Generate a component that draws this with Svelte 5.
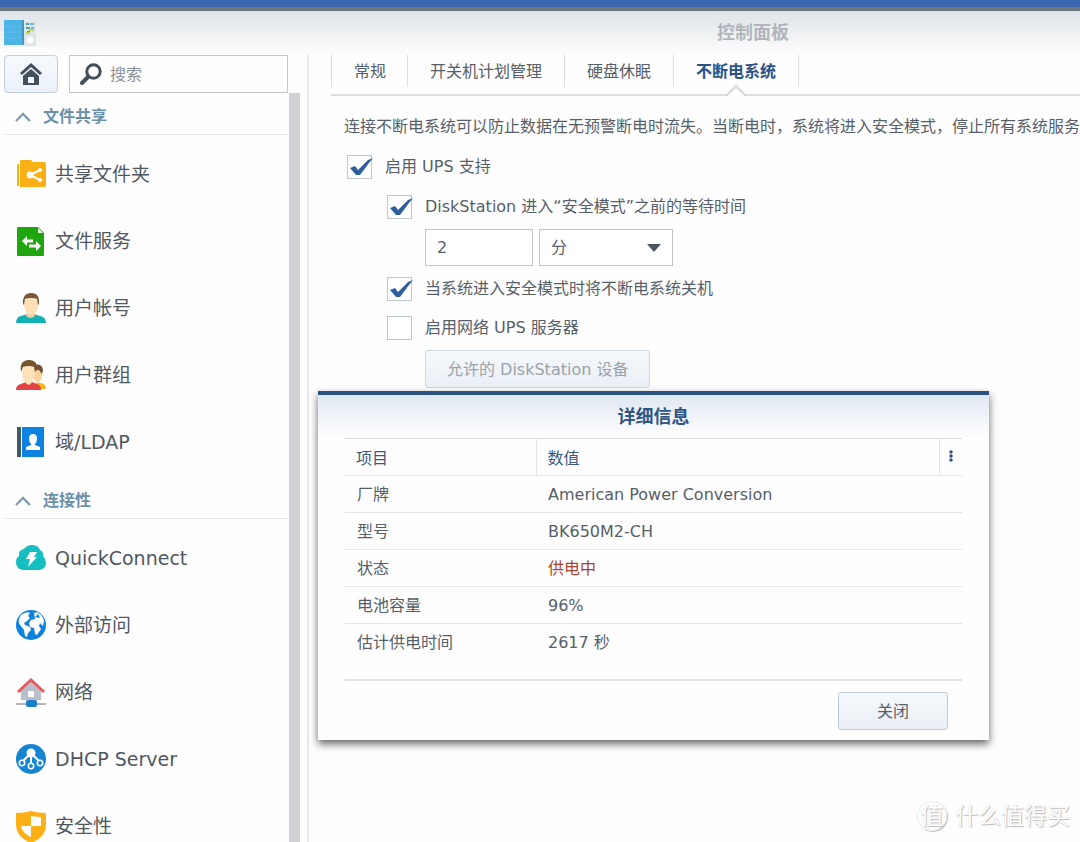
<script>
  let search = "";
  let activeTab = "不断电系统";
  let upsEnabled = true;
  let waitEnabled = true;
  let waitTime = 2;
  let waitUnit = "min";
  let shutdownUps = true;
  let networkServer = false;
  let showDetails = true;

  const tabs = ["常规", "开关机计划管理", "硬盘休眠", "不断电系统"];

  let sections = [
    {
      title: "文件共享",
      open: true,
      items: [
        { icon: "folder", label: "共享文件夹" },
        { icon: "file", label: "文件服务" },
        { icon: "user", label: "用户帐号" },
        { icon: "group", label: "用户群组" },
        { icon: "ldap", label: "域/LDAP" },
      ],
    },
    {
      title: "连接性",
      open: true,
      items: [
        { icon: "cloud", label: "QuickConnect" },
        { icon: "globe", label: "外部访问" },
        { icon: "network", label: "网络" },
        { icon: "dhcp", label: "DHCP Server" },
        { icon: "shield", label: "安全性" },
      ],
    },
  ];

  const details = [
    { name: "厂牌", value: "American Power Conversion" },
    { name: "型号", value: "BK650M2-CH" },
    { name: "状态", value: "供电中", alert: true },
    { name: "电池容量", value: "96%" },
    { name: "估计供电时间", value: "2617 秒" },
  ];

  function toggle(section) {
    section.open = !section.open;
    sections = sections;
  }
</script>

<div class="desktop">
  <div class="taskbar"></div>
  <div class="window">
    <header>
      <svg class="app-icon" viewBox="0 0 32 28">
        <rect x="0" y="1" width="19" height="25" fill="#4db4e6" />
        <path d="M0 7h19M0 13h19M0 19h19" stroke="#62bdea" stroke-width="1" />
        <rect x="18" y="1" width="2" height="25" fill="#4594c2" />
        <rect x="20" y="2" width="12" height="25" fill="#dfe5e6" />
        <path d="M22 5h3M22 9h4M23 13h3" stroke="#4c9f9b" stroke-width="2" />
        <path d="M26 5h4M27 9h3" stroke="#67b5dc" stroke-width="2" />
        <path d="M25 11h5M22 14h4" stroke="#bfd64a" stroke-width="2" />
        <circle cx="26" cy="21" r="3.5" fill="#fff" />
      </svg>
      <h1>控制面板</h1>
    </header>

    <div class="body">
      <aside>
        <div class="tools">
          <button class="home" aria-label="Home">
            <svg viewBox="0 0 22 22">
              <path d="M11 0 22 10l-2 2-9-8-9 8-2-2z" fill="#434f5a" />
              <path d="M11 6l8 7v9H3v-9z" fill="#434f5a" />
              <path d="M8 14h6v6H8z" fill="#f2f7fb" />
            </svg>
          </button>
          <label class="search">
            <svg viewBox="0 0 22 22">
              <circle cx="13.5" cy="8.5" r="6.7" fill="none" stroke="#434f5a" stroke-width="3" />
              <path d="M8 14l-6 6" stroke="#434f5a" stroke-width="4" stroke-linecap="round" />
            </svg>
            <input type="text" placeholder="搜索" aria-label="搜索" bind:value={search} />
          </label>
        </div>

        <div class="scroller">
          <nav>
            {#each sections as section}
              <button class="section" on:click={() => toggle(section)}>
                <svg viewBox="0 0 16 10" class:closed={!section.open}>
                  <path d="M1 9l7-7 7 7" fill="none" stroke="#7f9fae" stroke-width="2.4" />
                </svg>
                {section.title}
              </button>
              {#if section.open}
                <ul>
                  {#each section.items as item}
                    <li>
                      <a href="#{item.icon}">
                        <svg class="icon" viewBox="0 0 30 30">
                          {#if item.icon === "folder"}
                            <path d="M1 5h2v22H1z" fill="#fbb016" />
                            <path d="M4 27V2q0-1 1-1h10l2 2h11q2 0 2 2v22q0 1-1 1H4z" fill="#fbb016" />
                            <path d="M24 11l-10 5 10 5" fill="none" stroke="#fff" stroke-width="2" />
                            <circle cx="14" cy="16" r="3.4" fill="#fff" />
                            <circle cx="24" cy="11" r="2" fill="#fff" />
                            <circle cx="24" cy="21" r="2" fill="#fff" />
                          {:else if item.icon === "file"}
                            <path d="M2 1h20l6 6v22q0 1-1 1H2q-1 0-1-1V2q0-1 1-1z" fill="#1fa510" />
                            <path d="M22 2v5h5z" fill="#e4f6e0" />
                            <path d="M6 15l5-5v3.500h6v3h-6V20z" fill="#fff" />
                            <path d="M25 20l-5-5v3.500h-7v3h7V25z" fill="#fff" />
                          {:else if item.icon === "user"}
                            <path d="M0 30q0-6 5-7l6-2h7l6 2q6 1 6 7z" fill="#12b1b4" />
                            <path d="M10 20h9v3q-4 4-9 0z" fill="#f2cf9f" />
                            <path d="M8 8q7-6 14 0v5q-2 9-7 9t-7-9z" fill="#fde0b5" />
                            <path d="M7 11Q6 1 14 0q10-1 9 11l-1 1-1-6q-6-2-12 0l-1 6z" fill="#7c5835" />
                          {:else if item.icon === "group"}
                            <path d="M19 29q0-8 5-6 6 0 6 6z" fill="#fbb51d" />
                            <path d="M18 9h8v7q-1 6-5 7l-4-5z" fill="#fbd29c" />
                            <path d="M18 5q8-2 9 5l-1 4-3-4h-4z" fill="#715238" />
                            <path d="M0 30q0-5 5-6l5-2h6l5 2q4 1 4 6z" fill="#e44244" />
                            <path d="M7 8q7-5 12 1v6q-2 8-6 10-6-2-7-11z" fill="#fee2b9" />
                            <path d="M5 12Q3 1 12 0q10-1 9 10l-2 2-1-5q-5-2-11 0z" fill="#75542f" />
                          {:else if item.icon === "ldap"}
                            <path d="M1 0h4v30H1z" fill="#435764" />
                            <path d="M6 0h22v30H6z" fill="#0c83e0" />
                            <path d="M13 12q0-5 4-5t4 5q0 3-2 5v1l5 2v3H10v-3l5-2v-1q-2-2-2-5z" fill="#fff" />
                          {:else if item.icon === "cloud"}
                            <path d="M7 27q-7-1-7-8 0-4 3-6-1-6 5-7 3-4 8-4 6 0 8 5 4 2 3 6 3 3 3 7 0 6-7 7z" fill="#15bfc0" />
                            <path d="M14 9h7l-3 5h3l-9 10 2-8h-4z" fill="#fff" />
                          {:else if item.icon === "globe"}
                            <circle cx="15" cy="15" r="15" fill="#0c82df" />
                            <path d="M5 5q5-4 9-2l-2 3 2 2-3 3-3 2 1 2 5 2 1 3-3 3-1 4-2-1-1-6-4-5q-3-4 1-10z" fill="#fff" />
                            <path d="M18 3l3-1q6 3 7 9l-1 5-3-3-1 3 2 3-4 6-2-1-1-6-4-1-1-4 2-3 4-1z" fill="#fff" />
                            <path d="M19 7l3-3 2 4z" fill="#0c82df" />
                          {:else if item.icon === "network"}
                            <path d="M5 14l10-9 10 9v9H5z" fill="#b9bfca" />
                            <path d="M12 14h6v6h-6z" fill="#fff" />
                            <path d="M2 15L15 3l13 12" fill="none" stroke="#e7595c" stroke-width="3" />
                            <path d="M0 27h30" stroke="#b2b7bd" stroke-width="2" />
                            <rect x="10" y="23" width="11" height="7" rx="2" fill="#187fc9" />
                          {:else if item.icon === "dhcp"}
                            <circle cx="15" cy="15" r="15" fill="#1685d1" />
                            <path d="M15 10v9M12 12l-6 6M18 12l6 6" stroke="#fff" stroke-width="2" />
                            <circle cx="15" cy="9" r="4.500" fill="#fff" />
                            <circle cx="6" cy="19" r="2.700" fill="#1685d1" stroke="#fff" stroke-width="1.600" />
                            <circle cx="15" cy="22" r="2.700" fill="#1685d1" stroke="#fff" stroke-width="1.600" />
                            <circle cx="24" cy="19" r="2.700" fill="#1685d1" stroke="#fff" stroke-width="1.600" />
                          {:else}
                            <path d="M0 2q8 0 15-2 7 2 15 2v12q0 12-15 18Q0 26 0 14z" fill="#fbb016" />
                            <path d="M15 5q5 1 10 1v9H15z" fill="#fff" />
                            <path d="M5 15h10v11Q6 22 5 15z" fill="#fff" />
                          {/if}
                        </svg>
                        {item.label}
                      </a>
                    </li>
                  {/each}
                </ul>
              {/if}
            {/each}
          </nav>
          <div class="scrollbar"></div>
        </div>
      </aside>

      <main>
        <div class="tabs" role="tablist">
          {#each tabs as tab}
            <button
              role="tab"
              aria-selected={tab === activeTab}
              class:active={tab === activeTab}
              on:click={() => (activeTab = tab)}
            >
              {tab}
              {#if tab === activeTab}
                <svg class="notch" viewBox="0 0 20 12">
                  <path d="M0 12L10 1l10 11z" fill="#fefefe" />
                  <path d="M0 10h1L10 1l9 9h1" fill="none" stroke="#d5d8da" stroke-width="2" />
                </svg>
              {/if}
            </button>
          {/each}
        </div>

        <form on:submit|preventDefault>
          <p>连接不断电系统可以防止数据在无预警断电时流失。当断电时，系统将进入安全模式，停止所有系统服务</p>
          <label class="check">
            <span class="box">
              <input type="checkbox" bind:checked={upsEnabled} />
              <svg viewBox="0 0 28 24"><path d="M3 13l5-2 3 4L21 5l5-2-4 5-9 12h-4z" /></svg>
            </span>
            启用 UPS 支持
          </label>
          <div class="nested">
            <label class="check">
              <span class="box">
                <input type="checkbox" bind:checked={waitEnabled} />
                <svg viewBox="0 0 28 24"><path d="M3 13l5-2 3 4L21 5l5-2-4 5-9 12h-4z" /></svg>
              </span>
              DiskStation 进入“安全模式”之前的等待时间
            </label>
            <div class="fields">
              <input type="text" aria-label="等待时间" bind:value={waitTime} />
              <div class="select">
                <select aria-label="时间单位" bind:value={waitUnit}>
                  <option value="min">分</option>
                  <option value="sec">秒</option>
                </select>
                <svg viewBox="0 0 14 8"><path d="M0 0h14L7 8z" fill="#4b5660" /></svg>
              </div>
            </div>
            <label class="check">
              <span class="box">
                <input type="checkbox" bind:checked={shutdownUps} />
                <svg viewBox="0 0 28 24"><path d="M3 13l5-2 3 4L21 5l5-2-4 5-9 12h-4z" /></svg>
              </span>
              当系统进入安全模式时将不断电系统关机
            </label>
            <label class="check">
              <span class="box">
                <input type="checkbox" bind:checked={networkServer} />
                <svg viewBox="0 0 28 24"><path d="M3 13l5-2 3 4L21 5l5-2-4 5-9 12h-4z" /></svg>
              </span>
              启用网络 UPS 服务器
            </label>
            <button type="button" class="btn allowed" disabled={!networkServer}>允许的 DiskStation 设备</button>
          </div>
        </form>
      </main>
    </div>
  </div>

  {#if showDetails}
    <div class="dialog" role="dialog" aria-labelledby="details-title">
      <h2 id="details-title">详细信息</h2>
      <table>
        <thead>
          <tr>
            <th class="name">项目</th>
            <th>数值</th>
            <th class="more">
              <button aria-label="More">
                <svg viewBox="0 0 4 12">
                  <circle cx="2" cy="2" r="1.700" />
                  <circle cx="2" cy="6" r="1.700" />
                  <circle cx="2" cy="10" r="1.700" />
                </svg>
              </button>
            </th>
          </tr>
        </thead>
        <tbody>
          {#each details as row}
            <tr>
              <td>{row.name}</td>
              <td colspan="2" class:alert={row.alert}>{row.value}</td>
            </tr>
          {/each}
        </tbody>
      </table>
      <footer>
        <button class="btn close" on:click={() => (showDetails = false)}>关闭</button>
      </footer>
    </div>
  {/if}

  <div class="watermark">
    <span class="seal">值</span>
    什么值得买
  </div>
</div>

<style>
  :global(body) {
    background: #fefefe;
  }
  .desktop,
  button,
  input,
  select {
    font-family: "DejaVu Sans", "Noto Sans CJK SC", sans-serif;
    font-size: 16px;
    line-height: 24px;
    color: #565f68;
  }
  * {
    box-sizing: border-box;
  }
  button {
    margin: 0;
    padding: 0;
    border: 0;
    background: none;
    cursor: pointer;
  }
  svg {
    display: block;
    flex: none;
  }
  .desktop {
    position: relative;
    display: flex;
    flex-direction: column;
    height: 100vh;
    overflow: hidden;
  }
  .taskbar {
    flex: none;
    height: 11px;
    background: #3b69b0;
    border-bottom: 4px solid #6d7780;
  }

  /* The window is wider than the screen and runs off its right side */
  .window {
    display: flex;
    flex-direction: column;
    flex: 1;
    min-height: 0;
    width: 140vw;
    background: #fefefe;
  }
  header {
    display: grid;
    grid-template-columns: 40px 1fr 40px;
    align-items: center;
    flex: none;
    height: 44px;
    padding: 0 10px 0 4px;
    background: linear-gradient(#dfe3e7, #fefefe);
  }
  .app-icon {
    width: 32px;
    height: 28px;
  }
  h1 {
    margin: 0;
    font-size: 18px;
    line-height: 24px;
    text-align: center;
    color: #b0b6bc;
  }
  .body {
    display: flex;
    flex: 1;
    min-height: 0;
  }

  aside {
    display: flex;
    flex-direction: column;
    flex: none;
    width: 309px;
    border-right: 2px solid #e6e8ea;
  }
  .tools {
    display: flex;
    gap: 11px;
    flex: none;
    padding: 0 19px 0 4px;
  }
  .home {
    display: grid;
    place-items: center;
    width: 54px;
    height: 38px;
    border: 1px solid #c3ced8;
    border-radius: 4px;
    background: linear-gradient(#f6fafd, #eaf1f8);
  }
  .home svg,
  .search svg {
    width: 22px;
    height: 22px;
  }
  .search {
    display: flex;
    align-items: center;
    gap: 8px;
    flex: 1;
    padding-left: 10px;
    border: 1px solid #c4c8cc;
  }
  .search input {
    width: 100%;
    min-width: 0;
    padding: 2px 0 0;
    border: 0;
    outline: 0;
    background: none;
  }
  .search input::placeholder {
    color: #8a9299;
  }
  .scroller {
    display: flex;
    flex: 1;
    min-height: 0;
    padding-right: 7px;
  }
  nav {
    flex: 1;
    overflow: hidden;
    padding: 0 1px 0 4px;
  }
  .scrollbar {
    width: 11px;
    background: #d0d1d4;
  }
  .section {
    display: flex;
    align-items: center;
    gap: 12px;
    width: 100%;
    height: 42px;
    padding: 7px 0 0 11px;
    border-bottom: 1px solid #e7eaec;
    font-weight: bold;
    color: #6a90a8;
  }
  .section svg {
    width: 16px;
    height: 10px;
  }
  .section svg.closed {
    transform: rotate(180deg);
  }
  ul {
    margin: 0;
    padding: 5px 0 2px;
    list-style: none;
  }
  li a {
    display: flex;
    align-items: center;
    gap: 9px;
    height: 67px;
    padding-left: 12px;
    font-size: 19px;
    line-height: 28px;
    color: #50585f;
    text-decoration: none;
  }
  .icon {
    width: 30px;
    height: 30px;
    overflow: visible;
  }

  main {
    flex: 1;
    min-width: 0;
    padding-left: 22px;
  }
  .tabs {
    display: flex;
    height: 41px;
    padding-bottom: 7px;
    border-bottom: 2px solid #dcdee0;
  }
  .tabs button {
    position: relative;
    padding: 2px 22px 0;
    border-right: 1px solid #dcdfe1;
  }
  .tabs button:first-child {
    padding: 2px 21px 0 22px;
    border-left: 1px solid #dcdfe1;
  }
  .tabs .active {
    font-weight: bold;
    color: #2c5284;
  }
  .notch {
    position: absolute;
    top: 100%;
    left: 50%;
    width: 20px;
    height: 12px;
    margin: -2px 0 0 -10px;
  }
  form {
    padding: 19px 0 0 13px;
  }
  p {
    margin: 0 0 16px;
    white-space: nowrap;
  }
  .check {
    display: flex;
    align-items: center;
    gap: 13px;
    width: max-content;
    height: 24px;
    margin-left: 3px;
    line-height: 22px;
  }
  .box {
    display: grid;
    width: 25px;
    height: 24px;
  }
  .box input {
    grid-area: 1 / 1;
    appearance: none;
    width: 25px;
    height: 24px;
    margin: 0;
    border: 1px solid #bfc6cc;
    background: #fff;
  }
  .box svg {
    grid-area: 1 / 1;
    width: 28px;
    height: 24px;
    visibility: hidden;
    pointer-events: none;
    z-index: 1;
  }
  .box path {
    fill: #2f5f9b;
  }
  .box input:checked + svg {
    visibility: visible;
  }
  .nested {
    display: flex;
    flex-direction: column;
    gap: 15px;
    padding: 16px 0 0 40px;
  }
  .fields {
    display: flex;
    gap: 6px;
    margin: -5px 0 -4px 41px;
  }
  .fields input,
  .fields select {
    height: 37px;
    padding: 0 11px;
    border: 1px solid #c1c5c9;
    border-radius: 0;
    background: #fff;
  }
  .fields input {
    width: 108px;
  }
  .select {
    display: grid;
    align-items: center;
    width: 134px;
  }
  .select select {
    grid-area: 1 / 1;
    appearance: none;
    width: 100%;
  }
  .select svg {
    grid-area: 1 / 1;
    justify-self: end;
    width: 14px;
    height: 8px;
    margin-right: 12px;
    pointer-events: none;
  }
  .btn {
    height: 38px;
    padding: 2px 21px 0;
    border: 1px solid #bccad5;
    border-radius: 3px;
    background: linear-gradient(#f5f9fc, #e9eff5);
  }
  .btn:disabled {
    border-color: #cfd8df;
    color: #9ba2a9;
  }
  .allowed {
    width: max-content;
    margin: -5px 0 0 41px;
  }

  .dialog {
    position: absolute;
    top: 391px;
    left: 318px;
    width: 671px;
    padding: 0 27px 10px;
    border-top: 4px solid #2b5283;
    background: linear-gradient(#e1e8f2, #fefefe 42px);
    box-shadow: 0 4px 8px rgba(0, 0, 0, 0.6);
  }
  h2 {
    margin: 0;
    padding: 10px 0 9px;
    font-size: 18px;
    line-height: 24px;
    text-align: center;
    color: #2f5587;
  }
  table {
    width: 100%;
    border-collapse: collapse;
    border-top: 1px solid #d9dde1;
  }
  th,
  td {
    height: 37px;
    padding: 2px 12px 0;
    text-align: left;
    border-bottom: 1px solid #e4e7e9;
  }
  th {
    padding: 4px 11px 0;
    font-weight: normal;
    color: #39597f;
    border-right: 1px solid #e4e7e9;
  }
  .name {
    width: 191px;
  }
  .more {
    width: 23px;
    padding: 0 9px;
    border-right: 0;
  }
  .more svg {
    width: 4px;
    height: 12px;
    fill: #2f4f78;
  }
  tr:last-child td {
    border-bottom: 0;
  }
  .alert {
    color: #a8432f;
  }
  footer {
    display: flex;
    justify-content: flex-end;
    margin-top: 18px;
    padding: 11px 14px 0 0;
    border-top: 2px solid #dfe1e3;
  }
  .close {
    width: 110px;
  }

  .watermark {
    position: absolute;
    right: 10px;
    bottom: 10px;
    display: flex;
    align-items: center;
    gap: 8px;
    font-size: 23px;
    line-height: 32px;
    color: #fff;
    text-shadow: 1px 1px 1px #bbb, 0 0 1px #ccc;
  }
  .seal {
    width: 30px;
    height: 30px;
    line-height: 28px;
    text-align: center;
    border: 1px solid #eee;
    border-radius: 50%;
    box-shadow: 1px 1px 1px #bbb;
  }
</style>
